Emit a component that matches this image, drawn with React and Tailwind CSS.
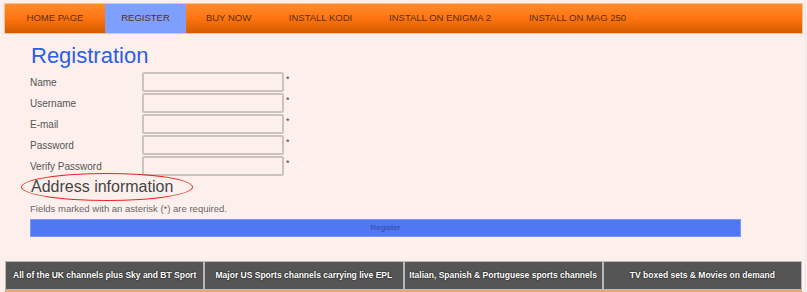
import React from 'react';

const navItems = [
  { label: 'HOME PAGE', w: 'w-[100px]' },
  { label: 'REGISTER', w: 'w-[81px]' },
  { label: 'BUY NOW', w: 'w-[85px]' },
  { label: 'INSTALL KODI', w: 'w-[99px]' },
  { label: 'INSTALL ON ENIGMA 2', w: 'w-[140px]' },
  { label: 'INSTALL ON MAG 250', w: 'w-[135px]' },
];

const fields = ['Name', 'Username', 'E-mail', 'Password', 'Verify Password'];

const footerItems = [
  'All of the UK channels plus Sky and BT Sport',
  'Major US Sports channels carrying live EPL',
  'Italian, Spanish & Portuguese sports channels',
  'TV boxed sets & Movies on demand',
];

const App = () => {
  return (
    <div className="w-[807px] h-[292px] bg-[#fdf0ec] relative overflow-hidden font-['Liberation_Sans',Arial,sans-serif]">
      <div className="absolute right-[1px] top-0 bottom-0 w-[1px] bg-[#e4e6f0]"></div>

      {/* top menu */}
      <div className="pt-[3px] pl-[4px] pr-[4px]">
        <div className="h-[31px] border border-[#f6c29a] bg-gradient-to-b from-[#ff8a2a] via-[#ff7410] to-[#d45c00] flex">
          {navItems.map((item) => (
            <div
              key={item.label}
              className={`h-full flex items-center justify-center text-[9.5px] text-[#5a2e0c] ${item.w} ${
                item.label === 'REGISTER' ? 'bg-[#7f9ffc] text-[#4a4a5a]' : ''
              }`}
            >
              {item.label}
            </div>
          ))}
        </div>
      </div>

      {/* registration form */}
      <div className="pl-[30px] pr-[65px]">
        <h1 className="text-[22px] leading-[26px] text-[#2b5ee8] mt-[9px] ml-[1px]">Registration</h1>
        <div className="mt-[3px] flex flex-col gap-[1px]">
          {fields.map((f) => (
            <div key={f} className="flex items-center h-[20px]">
              <label className="w-[112px] text-[10px] text-[#555555]">{f}</label>
              <input className="w-[142px] h-[20px] border-2 border-[#cbc4bd] rounded-[2px] bg-[#fdf0ec] outline-none" />
              <span className="ml-[2px] text-[9px] text-[#444] -mt-[4px]">*</span>
            </div>
          ))}
        </div>
        <div className="relative h-[22px]">
          <div className="absolute left-[-9px] top-[-3px] w-[172px] h-[28px] border border-[#e8261e] rounded-[50%]"></div>
          <h2 className="text-[16px] leading-[22px] text-[#444444] ml-[1px]">Address information</h2>
        </div>
        <p className="mt-[4px] text-[9.5px] leading-[14px] text-[#666666]">Fields marked with an asterisk (*) are required.</p>
        <button className="mt-[3px] w-[711px] h-[18px] bg-[#4f78f2] border border-[#7b99f7] text-[8px] text-[#35489a] flex items-center justify-center">
          Register
        </button>
      </div>

      {/* footer */}
      <div className="absolute left-[5px] top-[261px] w-[797px] flex">
        {footerItems.map((t) => (
          <div
            key={t}
            className="flex-1 h-[29px] bg-[#555555] border border-[#b8b8b8] flex items-center justify-center text-[8.5px] font-bold text-white [text-shadow:0_0_2px_#000]"
          >
            {t}
          </div>
        ))}
      </div>
      <div className="absolute left-[5px] top-[290px] w-[797px] h-[2px] bg-[#f3a468]"></div>
    </div>
  );
};

export default App;
